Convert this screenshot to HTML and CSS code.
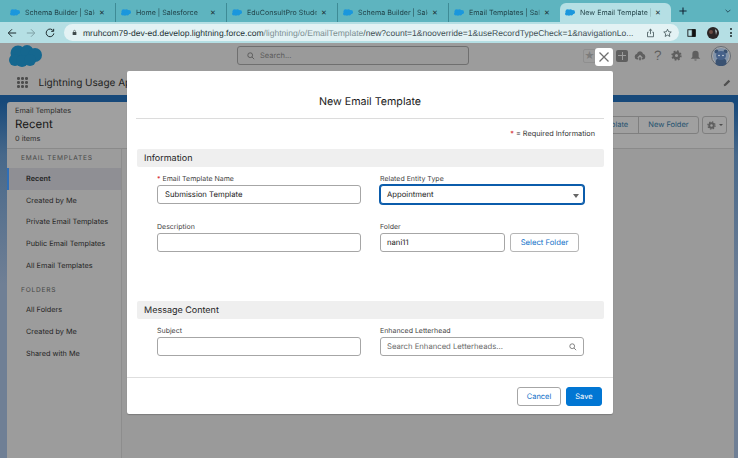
FILE: index.html
```html
<!DOCTYPE html>
<html lang="en">
<head>
<meta charset="utf-8">
<title>New Email Template | Salesforce</title>
<link rel="stylesheet" href="styles.css">
</head>
<body>
<svg class="defs" width="0" height="0" aria-hidden="true">
  <symbol id="cloud" viewBox="0 0 33 22">
    <circle cx="9" cy="8" r="7.5"/><circle cx="18" cy="6.5" r="6.5"/><circle cx="26" cy="10" r="7"/>
    <circle cx="6" cy="15" r="6"/><circle cx="13" cy="16" r="6"/><circle cx="21" cy="15" r="6"/>
  </symbol>
</svg>
<div class="tabs">
  <div class="tab"><svg class="tab-ico"><use href="#cloud"/></svg><span class="tab-text">Schema Builder | Sale</span><span class="tab-x">✕</span></div>
  <div class="tab"><svg class="tab-ico"><use href="#cloud"/></svg><span class="tab-text">Home | Salesforce</span><span class="tab-x">✕</span></div>
  <div class="tab"><svg class="tab-ico"><use href="#cloud"/></svg><span class="tab-text">EduConsultPro Stude</span><span class="tab-x">✕</span></div>
  <div class="tab"><svg class="tab-ico"><use href="#cloud"/></svg><span class="tab-text">Schema Builder | Sale</span><span class="tab-x">✕</span></div>
  <div class="tab tab-last"><svg class="tab-ico"><use href="#cloud"/></svg><span class="tab-text">Email Templates | Sal</span><span class="tab-x">✕</span></div>
  <div class="tab tab-active"><svg class="tab-ico"><use href="#cloud"/></svg><span class="tab-text">New Email Template |</span><span class="tab-x">✕</span></div>
  <svg class="tab-plus" viewBox="0 0 10 10"><path d="M5 0.500v9M0.500 5h9"/></svg>
  <svg class="tab-chev" viewBox="0 0 10 6"><path d="M1 1l4 4 4-4"/></svg>
</div>
<div class="toolbar">
  <svg class="tb-ico" viewBox="0 0 12 12"><path d="M11 6H2M6 1.500L1.500 6 6 10.500"/></svg>
  <svg class="tb-ico tb-off" viewBox="0 0 12 12"><path d="M1 6h9M6 1.500L10.500 6 6 10.500"/></svg>
  <svg class="tb-ico" viewBox="0 0 12 12"><path d="M10 3.500A4.600 4.600 0 1 0 10.600 6.500M10.400 1v3H7.400"/></svg>
  <div class="omnibox">
    <svg class="lock" viewBox="0 0 8 10"><rect x="1" y="4" width="6" height="5" rx="1"/><path class="lock-arc" d="M2.500 4V3a1.500 1.500 0 0 1 3 0v1"/></svg>
    <div class="url"><span class="url-host">mruhcom79-dev-ed.develop.lightning.force.com</span><span class="url-path">/lightning/o/EmailTemplate</span><span class="url-rest">/new?count=1&amp;nooverride=1&amp;useRecordTypeCheck=1&amp;navigationLo...</span></div>
    <svg class="omni-ico" viewBox="0 0 12 12"><path d="M6 7.500V1M3.800 3L6 1l2.200 2M3.500 5H2v6h8V5H8.500"/></svg>
    <svg class="omni-ico" viewBox="0 0 12 12"><path d="M6 1l1.500 3.300 3.500.4-2.600 2.400.7 3.500L6 8.800 2.900 10.600l.7-3.500L1 4.700l3.500-.4z"/></svg>
  </div>
  <svg class="side-ico" viewBox="0 0 12 11"><rect x="1" y="1" width="10" height="9"/><rect class="side-fill" x="7" y="1" width="4" height="9"/></svg>
  <svg class="profile" viewBox="0 0 12 12"><circle class="profile-bg" cx="6" cy="6" r="6"/><circle class="profile-face" cx="4" cy="5" r="2"/><path class="profile-hl" d="M8 2l2 2-1 4z"/></svg>
  <div class="kebab"><i></i><i></i><i></i></div>
</div>
<div class="sf-top">
  <svg class="sf-logo"><use href="#cloud"/></svg>
  <div class="sf-search">
    <svg class="sf-search-ico" viewBox="0 0 10 10"><circle cx="4" cy="4" r="3"/><path d="M6.300 6.300L9 9"/></svg>
    <span>Search...</span>
  </div>
  <div class="sf-tools">
    <div class="fav">★</div>
    <div class="plus-box"></div>
    <svg class="tool tool-cloud" viewBox="0 0 14 14"><path class="tool-fill" d="M7 1.500a3.600 3.600 0 0 1 3.500 3A3.300 3.300 0 0 1 10.500 11H9V9h1.500L7 5.500 3.500 9H5v2H3.500a3.300 3.300 0 0 1 0-6.500A3.600 3.600 0 0 1 7 1.500z"/><path class="tool-fill" d="M6 8.500h2V12H6z"/></svg>
    <span class="tool-q">?</span>
    <svg class="tool tool-gear" viewBox="0 0 14 14"><circle class="gear-teeth" cx="7" cy="7" r="5.600"/><circle class="tool-ring" cx="7" cy="7" r="3.500"/></svg>
    <svg class="tool tool-bell" viewBox="0 0 14 14"><path class="tool-fill" d="M7 1a4 4 0 0 1 4 4v4l2 2H1l2-2V5a4 4 0 0 1 4-4zM5.500 12h3a1.500 1.500 0 0 1-3 0z"/></svg>
    <svg class="avatar" viewBox="0 0 20 20"><circle class="av-ring" cx="10" cy="10" r="9.500"/><circle class="av-bg" cx="10" cy="10" r="8"/><circle class="av-ear" cx="5.500" cy="5.500" r="2"/><circle class="av-ear" cx="14.500" cy="5.500" r="2"/><path class="av-body" d="M4.500 18c0-4 1-5 2-5h7c1 0 2 1 2 5a8 8 0 0 1-11 0z"/><ellipse class="av-head" cx="10" cy="9.500" rx="5" ry="4.500"/><circle class="av-eye" cx="8" cy="9.500" r=".8"/><circle class="av-eye" cx="12" cy="9.500" r=".8"/></svg>
  </div>
</div>
<div class="sf-nav">
  <div class="waffle"><i></i><i></i><i></i><i></i><i></i><i></i><i></i><i></i><i></i></div>
  <span class="app-name">Lightning Usage App</span>
  <svg class="pencil" viewBox="0 0 10 10"><path d="M1 9l.5-2.500L7 1l2 2-5.500 5.500z"/></svg>
</div>
<div class="workspace">
  <div class="panel">
    <div class="panel-head">
      <div class="crumb">
        <div class="crumb-small">Email Templates</div>
        <div class="crumb-title">Recent</div>
        <div class="crumb-small crumb-count">0 items</div>
      </div>
      <div class="btn-group">
        <span class="group-btn">New Email Template</span>
        <span class="group-btn">New Folder</span>
      </div>
      <div class="gear-btn">
        <svg class="gear-ico" viewBox="0 0 14 14"><circle class="gear-teeth" cx="7" cy="7" r="5.600"/><circle class="tool-ring" cx="7" cy="7" r="3.500"/></svg>
        <span class="gear-caret"></span>
      </div>
    </div>
    <div class="panel-main">
      <div class="sidebar">
        <div class="side-title">EMAIL TEMPLATES</div>
        <div class="side-item side-active">Recent</div>
        <div class="side-item">Created by Me</div>
        <div class="side-item">Private Email Templates</div>
        <div class="side-item">Public Email Templates</div>
        <div class="side-item">All Email Templates</div>
        <div class="side-title side-title-2">FOLDERS</div>
        <div class="side-item">All Folders</div>
        <div class="side-item">Created by Me</div>
        <div class="side-item">Shared with Me</div>
      </div>
      <div class="list-area"></div>
    </div>
  </div>
</div>

<div class="close-btn"><svg viewBox="0 0 12 12"><path d="M1.500 1.500l9 9M10.500 1.500l-9 9"/></svg></div>
<div class="modal">
  <div class="modal-head">New Email Template</div>
  <div class="modal-body">
    <div class="req-line"><span class="star">*</span> = Required Information</div>
    <div class="section-bar">Information</div>
    <div class="form-grid">
      <div class="field">
        <div class="label"><span class="star">*</span> Email Template Name</div>
        <div class="input">Submission Template</div>
      </div>
      <div class="field">
        <div class="label">Related Entity Type</div>
        <div class="input input-focus">Appointment<span class="select-caret"></span></div>
      </div>
      <div class="field">
        <div class="label">Description</div>
        <div class="input"></div>
      </div>
      <div class="field">
        <div class="label">Folder</div>
        <div class="folder-row">
          <div class="input folder-input">nani11</div>
          <div class="select-folder">Select Folder</div>
        </div>
      </div>
    </div>
    <div class="section-bar section-2">Message Content</div>
    <div class="form-grid form-grid-2">
      <div class="field">
        <div class="label">Subject</div>
        <div class="input"></div>
      </div>
      <div class="field">
        <div class="label">Enhanced Letterhead</div>
        <div class="input input-search">Search Enhanced Letterheads...
          <svg class="search-ico" viewBox="0 0 10 10"><circle cx="4" cy="4" r="3"/><path d="M6.300 6.300L9 9"/></svg>
        </div>
      </div>
    </div>
  </div>
  <div class="modal-foot">
    <div class="btn-cancel">Cancel</div>
    <div class="btn-save">Save</div>
  </div>
</div>
</body>
</html>
```
FILE: styles.css
```css
* { box-sizing: border-box; }
html, body { margin: 0; padding: 0; }
body {
  width: 738px;
  height: 458px;
  overflow: hidden;
  position: relative;
  font-family: Inter, "Liberation Sans", Arial, sans-serif;
  text-rendering: geometricPrecision;
  background: #9b9b9b;
  color: #2b2b2b;
}
.defs { position: absolute; }

/* browser tabs */
.tabs {
  height: 22px;
  background: #5eb4bf;
  display: flex;
  align-items: center;
  padding-left: 5px;
}
.tab {
  width: 111px;
  height: 19px;
  margin-top: 3px;
  display: flex;
  align-items: center;
  padding: 0 5px;
  border-right: 1px solid #3e8b96;
  font-size: 7.100px;
  color: #1f3f45;
}
.tab-last { border-right: none; }
.tab-active {
  background: #b5dfe4;
  border-radius: 6px 6px 0 0;
  border-right: none;
}
.tab-ico {
  width: 10px;
  height: 7px;
  fill: #1b97dd;
  margin-right: 5px;
  flex: none;
}
.tab-text {
  flex: 1;
  white-space: nowrap;
  -webkit-mask-image: linear-gradient(to right, #000 66px, transparent 75px);
  mask-image: linear-gradient(to right, #000 66px, transparent 75px);
  min-width: 0;
}
.tab-x { width: 12px; margin-left: 1px; margin-right: 2px; text-align: center; font-size: 7px; color: #1c2f33; flex: none; }
.tab-plus { width: 8px; height: 8px; margin-left: 8px; fill: none; stroke: #123; stroke-width: 1.300; flex: none; }
.tab-chev { width: 6px; height: 4px; margin-left: 38px; fill: none; stroke: #123; stroke-width: 1.100; flex: none; }

/* browser toolbar */
.toolbar {
  height: 21px;
  background: #b5dfe4;
  display: flex;
  align-items: center;
  padding-left: 7px;
}
.tb-ico { width: 10px; height: 10px; margin-right: 9px; fill: none; stroke: #1d2b2e; stroke-width: 1.200; flex: none; }
.tb-off { stroke: #7fa0a5; }
.omnibox {
  width: 615px;
  height: 17px;
  background: #e3f2f4;
  border-radius: 9px;
  display: flex;
  align-items: center;
  padding-left: 8px;
  flex: none;
}
.lock { width: 5px; height: 7px; margin-right: 6px; flex: none; }
.lock rect { fill: #3f4a4c; }
.lock-arc { fill: none; stroke: #3f4a4c; }
.url { width: 555px; font-family: "Liberation Sans", Arial, sans-serif; font-size: 8.550px; white-space: nowrap; flex: none; }
.url-host { color: #243236; }
.url-path { color: #7d9093; }
.url-rest { color: #3f5054; }
.omni-ico { width: 9px; height: 10px; margin-left: 8px; fill: none; stroke: #34474b; stroke-width: 1; flex: none; }
.side-ico { width: 9px; height: 8px; margin-left: 8px; fill: none; stroke: #111; stroke-width: 1.200; flex: none; }
.side-fill { fill: #111; }
.profile { width: 12px; height: 12px; margin-left: 11px; flex: none; }
.profile-bg { fill: #2b2525; }
.profile-face { fill: #6d4a42; }
.profile-hl { fill: #b9c4c6; }
.kebab { display: flex; flex-direction: column; gap: 1.500px; margin-left: 11px; flex: none; }
.kebab i { width: 2px; height: 2px; border-radius: 50%; background: #1a2629; display: block; }

/* salesforce header */
.sf-top {
  height: 27px;
  background: #9c9c9c;
  display: flex;
  align-items: center;
  padding-left: 9px;
}
.sf-logo { width: 33px; height: 22px; fill: #15678f; flex: none; margin-top: -1px; }
.sf-search {
  width: 232px;
  height: 19px;
  margin-left: 195px;
  margin-top: -2px;
  border: 1px solid #6f6f6f;
  border-radius: 3px;
  background: #9a9a9a;
  display: flex;
  align-items: center;
  padding-left: 9px;
  font-size: 7.500px;
  color: #5a5a5a;
  flex: none;
}
.sf-search-ico { width: 8px; height: 8px; margin-right: 5px; fill: none; stroke: #505050; stroke-width: 1; }
.sf-tools {
  margin-left: 114px;
  margin-top: -2px;
  display: flex;
  align-items: center;
  flex: none;
}
.fav {
  width: 13px;
  height: 14px;
  border: 1px solid #8f8f8f;
  border-radius: 2px;
  font-size: 10px;
  line-height: 12px;
  color: #7c7c7c;
  text-align: center;
  margin-right: 20px;
  flex: none;
}
.plus-box {
  width: 12px;
  height: 12px;
  border-radius: 2px;
  background:
    linear-gradient(#9c9c9c, #9c9c9c) center / 8px 1px no-repeat,
    linear-gradient(#9c9c9c, #9c9c9c) center / 1px 8px no-repeat,
    #5f5f5f;
  flex: none;
}
.tool { width: 11px; height: 11px; flex: none; }
.tool-cloud { margin-left: 6px; width: 12px; height: 12px; }
.tool-gear { margin-left: 10px; }
.tool-bell { margin-left: 8px; }
.tool-fill { fill: #5f5f5f; }
.tool-ring { fill: none; stroke: #5f5f5f; stroke-width: 3; }
.gear-teeth { fill: none; stroke: #5f5f5f; stroke-width: 2; stroke-dasharray: 2.200 2.200; }
.tool-q { font-size: 13.500px; line-height: 14px; color: #5f5f5f; margin-left: 8px; width: 7px; flex: none; font-family: "Liberation Sans", sans-serif; }
.avatar { width: 20px; height: 20px; margin-left: 10px; flex: none; }
.av-ring { fill: #a9a9a9; stroke: #666c74; }
.av-bg { fill: #8293a9; }
.av-ear { fill: #3a5272; }
.av-body { fill: #3a5272; }
.av-head { fill: #46618a; }
.av-eye { fill: #d9dde2; }

.sf-nav {
  height: 25px;
  background: #9c9c9c;
  display: flex;
  align-items: center;
  padding-left: 17px;
}
.waffle { display: grid; grid-template-columns: repeat(3, 2.500px); gap: 1.500px; flex: none; }
.waffle i { width: 2.500px; height: 2.500px; border-radius: 50%; background: #4d4d4d; display: block; }
.app-name { font-size: 10px; margin-left: 11px; color: #222; white-space: nowrap; }
.pencil { width: 8px; height: 8px; margin-left: auto; margin-right: 7px; fill: #4f4f4f; flex: none; }

/* page behind modal */
.workspace {
  height: 363px;
  padding: 7px 4px 0 7px;
  background: linear-gradient(#17497a 0, #17497a 7px, #47688a 60px, #6f7f95 190px, #6f7f95 100%);
}
.panel { height: 100%; display: flex; flex-direction: column; border-radius: 3px 3px 0 0; overflow: hidden; }
.panel-head {
  height: 47px;
  background: #a0a0a0;
  border-bottom: 1px solid #8a8a8a;
  display: flex;
  align-items: center;
  padding: 0 1px 0 8px;
  flex: none;
}
.crumb { width: 571px; flex: none; margin-top: -1px; }
.crumb-small { font-size: 7.300px; line-height: 10px; color: #2f2f2f; }
.crumb-title { font-size: 11.500px; line-height: 17px; color: #151515; }
.crumb-count { margin-top: 1px; }
.btn-group {
  display: flex;
  margin-left: -40px;
  height: 18px;
  border: 1px solid #7f7f7f;
  border-radius: 3px;
  flex: none;
}
.group-btn {
  font-size: 7.500px;
  line-height: 16px;
  color: #24526f;
  padding: 0 9.500px;
  white-space: nowrap;
  border-left: 1px solid #7f7f7f;
}
.group-btn:first-child { border-left: none; }
.gear-btn {
  width: 25px;
  height: 18px;
  margin-left: 3px;
  border: 1px solid #7f7f7f;
  border-radius: 3px;
  display: flex;
  align-items: center;
  justify-content: center;
  gap: 3px;
  flex: none;
}
.gear-ico { width: 9px; height: 9px; flex: none; }
.gear-caret { border-top: 2px solid #4d4d4d; border-left: 2px solid transparent; border-right: 2px solid transparent; }
.panel-main { flex: 1; display: flex; min-height: 0; }
.sidebar { width: 115px; background: #9c9c9c; border-right: 1px solid #8d8d8d; padding-top: 3px; flex: none; }
.list-area { flex: 1; background: #9a9a9a; }
.side-title {
  height: 13px;
  padding-left: 14px;
  font-size: 6.600px;
  line-height: 13px;
  letter-spacing: 0.75px;
  color: #474747;
  margin-bottom: 3px;
}
.side-title-2 { margin-top: 8px; margin-bottom: 2px; }
.side-item {
  height: 21.700px;
  padding-left: 19px;
  font-size: 7.300px;
  line-height: 22px;
  color: #252525;
  white-space: nowrap;
}
.side-active {
  font-weight: 600;
  background: #8f8f94;
  box-shadow: inset 2px 0 0 #2f6fb8;
}

/* modal */
.close-btn {
  position: absolute;
  left: 595px;
  top: 48px;
  width: 18px;
  height: 18px;
  background: #fff;
  border-radius: 3px;
  display: flex;
  align-items: center;
  justify-content: center;
}
.close-btn svg { width: 12px; height: 12px; fill: none; stroke: #6f6f6f; stroke-width: 1.300; }
.modal {
  position: absolute;
  left: 127px;
  top: 71px;
  width: 486px;
  height: 343px;
  background: #fff;
  border-radius: 2px;
  box-shadow: 0 1px 1px rgba(0, 0, 0, 0.2);
  display: flex;
  flex-direction: column;
}
.modal-head {
  height: 48px;
  margin: 0 9px;
  border-bottom: 1px solid #dcdcdc;
  text-align: center;
  font-size: 10.700px;
  line-height: 62px;
  color: #1a1a1a;
  flex: none;
}
.modal-body { flex: 1; padding: 0 9px 0 10px; }
.req-line { height: 30px; line-height: 30px; text-align: right; padding-right: 9px; font-size: 7.300px; color: #333; }
.star { color: #d4202a; }
.section-bar {
  height: 18px;
  background: #efefef;
  border-radius: 2px;
  padding-left: 7px;
  font-size: 9px;
  line-height: 19px;
  color: #1f1f1f;
}
.section-2 { margin-top: 49px; }
.form-grid {
  display: grid;
  grid-template-columns: 204px 204px;
  column-gap: 19px;
  row-gap: 16px;
  padding: 5px 0 0 20px;
}
.label { height: 13px; font-size: 7px; line-height: 13px; color: #444; white-space: nowrap; }
.input {
  height: 19px;
  border: 1px solid #a6a6a6;
  border-radius: 3px;
  background: #fff;
  padding-left: 7px;
  font-size: 7.700px;
  line-height: 18px;
  color: #222;
  position: relative;
  white-space: nowrap;
}
.input-focus { border: 1px solid #0b5cab; box-shadow: 0 0 0 1px #0b5cab; padding-left: 6px; }
.select-caret {
  position: absolute;
  right: 4px;
  top: 8px;
  border-top: 4px solid #666;
  border-left: 3px solid transparent;
  border-right: 3px solid transparent;
}
.folder-row { display: flex; gap: 5px; }
.folder-input { width: 125px; flex: none; padding-left: 6px; }
.select-folder {
  width: 69px;
  height: 19px;
  border: 1px solid #b5b5b5;
  border-radius: 3px;
  text-align: center;
  font-size: 7.700px;
  line-height: 18px;
  color: #0f70c8;
  white-space: nowrap;
  flex: none;
}
.input-search { color: #6a6a6a; display: flex; align-items: center; justify-content: space-between; padding: 0 6px; }
.search-ico { width: 8px; height: 8px; fill: none; stroke: #666; stroke-width: 1; flex: none; }
.modal-foot {
  height: 37px;
  border-top: 1.500px solid #dedede;
  display: flex;
  justify-content: flex-end;
  align-items: center;
  gap: 5px;
  padding-right: 11px;
  flex: none;
}
.btn-cancel, .btn-save {
  height: 19px;
  border-radius: 3px;
  text-align: center;
  font-size: 7.500px;
  line-height: 18px;
}
.btn-cancel { width: 44px; border: 1px solid #a6a6a6; color: #0f70c8; background: #fff; }
.btn-save { width: 36px; border: 1px solid #0176d3; color: #fff; background: #0176d3; }
```
